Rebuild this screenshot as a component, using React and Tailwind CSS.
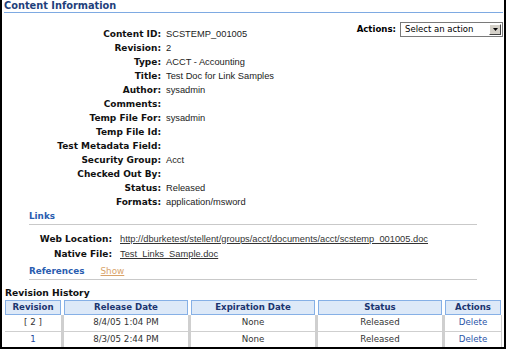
const fields = [
  ["Content ID:", "SCSTEMP_001005"],
  ["Revision:", "2"],
  ["Type:", "ACCT - Accounting"],
  ["Title:", "Test Doc for Link Samples"],
  ["Author:", "sysadmin"],
  ["Comments:", ""],
  ["Temp File For:", "sysadmin"],
  ["Temp File Id:", ""],
  ["Test Metadata Field:", ""],
  ["Security Group:", "Acct"],
  ["Checked Out By:", ""],
  ["Status:", "Released"],
  ["Formats:", "application/msword"],
];

const revisions = [
  { rev: "[ 2 ]", current: true, released: "8/4/05 1:04 PM", expires: "None", status: "Released" },
  { rev: "1", current: false, released: "8/3/05 2:44 PM", expires: "None", status: "Released" },
];

const verdana = "font-['DejaVu_Sans',Verdana,sans-serif]";
const arial = "font-['Liberation_Sans',Arial,sans-serif]";

const ActionsSelect = () => (
  <div className="flex items-center gap-[4px]">
    <span className={`${verdana} text-[8.6px] font-bold text-black`}>Actions:</span>
    <div className="w-[103px] h-[15px] flex items-center border border-[#7a7a7a] bg-white">
      <span className={`${verdana} flex-1 pl-[4px] text-[8.5px] leading-none text-black`}>
        Select an action
      </span>
      <div className="w-[12px] h-[11px] mr-[1px] flex items-center justify-center bg-[#d4d0c8] border border-t-white border-l-white border-r-[#404040] border-b-[#404040]">
        <svg width="5" height="3" viewBox="0 0 5 3">
          <path d="M0 0h5L2.5 3z" fill="#000" />
        </svg>
      </div>
    </div>
  </div>
);

const App = () => {
  return (
    <div className="w-[506px] h-[349px] overflow-hidden bg-white border-l-2 border-r-2 border-b-2 border-black">
      <div className="ml-[2px] mr-[1px] h-[13px] border-b border-[#7eaae2]">
        <h1 className={`${verdana} text-[9.8px] leading-[12px] font-bold text-[#1f3f7b]`}>
          Content Information
        </h1>
      </div>

      <div className="mt-[8px] flex">
        <div className="flex-1 pt-[7px]">
          {fields.map(([label, value]) => (
            <div key={label} className="h-[14px] flex items-center">
              <div className={`${verdana} w-[159px] text-right text-[9px] font-bold text-[#111]`}>
                {label}
              </div>
              <div className={`${arial} pl-[5px] text-[9.3px] text-[#222]`}>{value}</div>
            </div>
          ))}
        </div>
        <div className="mt-[1px] mr-[1px] self-start">
          <ActionsSelect />
        </div>
      </div>

      <div className="ml-[27px] w-[448px] h-[15px] flex items-center border-b border-[#c9c9c9]">
        <span className={`${verdana} text-[8.8px] font-bold text-[#2a5db0]`}>Links</span>
      </div>
      <div className="mt-[7px]">
        <div className="h-[15px] flex items-center">
          <div className={`${verdana} w-[110px] text-right text-[9px] font-bold text-[#111]`}>
            Web Location:
          </div>
          <a className={`${arial} pl-[8px] text-[9.3px] text-[#333] underline`}>
            http://dburketest/stellent/groups/acct/documents/acct/scstemp_001005.doc
          </a>
        </div>
        <div className="h-[15px] flex items-center">
          <div className={`${verdana} w-[110px] text-right text-[9px] font-bold text-[#111]`}>
            Native File:
          </div>
          <a className={`${arial} pl-[8px] text-[9.3px] text-[#333] underline`}>
            Test_Links_Sample.doc
          </a>
        </div>
      </div>
      <div className="mt-[3px] ml-[27px] w-[448px] h-[15px] flex items-center gap-[16px] border-b border-[#c9c9c9]">
        <span className={`${verdana} text-[8.8px] font-bold text-[#2a5db0]`}>References</span>
        <a className={`${verdana} text-[8.8px] text-[#d9a36a] underline`}>Show</a>
      </div>

      <div className={`${verdana} mt-[5px] ml-[3px] h-[15px] flex items-center text-[9.2px] font-bold text-[#111]`}>
        Revision History
      </div>

      <div className="ml-[3px] mr-[2px]">
        <div className="grid grid-cols-[56px_124px_124px_124px_56px] gap-x-[3px]">
          {["Revision", "Release Date", "Expiration Date", "Status", "Actions"].map((h) => (
            <div
              key={h}
              className={`${verdana} h-[15px] flex items-center justify-center border border-[#86b0e6] bg-[#dde9f8] text-[8.6px] font-bold text-[#1b3570]`}
            >
              {h}
            </div>
          ))}
        </div>
        {revisions.map((r, i) => (
          <div
            key={r.rev}
            className={`grid grid-cols-[56px_124px_124px_124px_56px] gap-x-[3px] bg-[#cfcfcf] ${
              i === 0 ? "pb-px" : ""
            }`}
          >
            {[r.rev, r.released, r.expires, r.status].map((c, j) => (
              <div
                key={j}
                className={`${verdana} h-[16px] flex items-center justify-center bg-white text-[8.7px] ${
                  j === 0 && !r.current ? "text-[#234a9c]" : "text-[#333]"
                }`}
              >
                {c}
              </div>
            ))}
            <div className={`${verdana} h-[16px] flex items-center justify-center bg-white text-[8.7px] text-[#2a55a8]`}>
              Delete
            </div>
          </div>
        ))}
      </div>
    </div>
  );
};

export default App;
